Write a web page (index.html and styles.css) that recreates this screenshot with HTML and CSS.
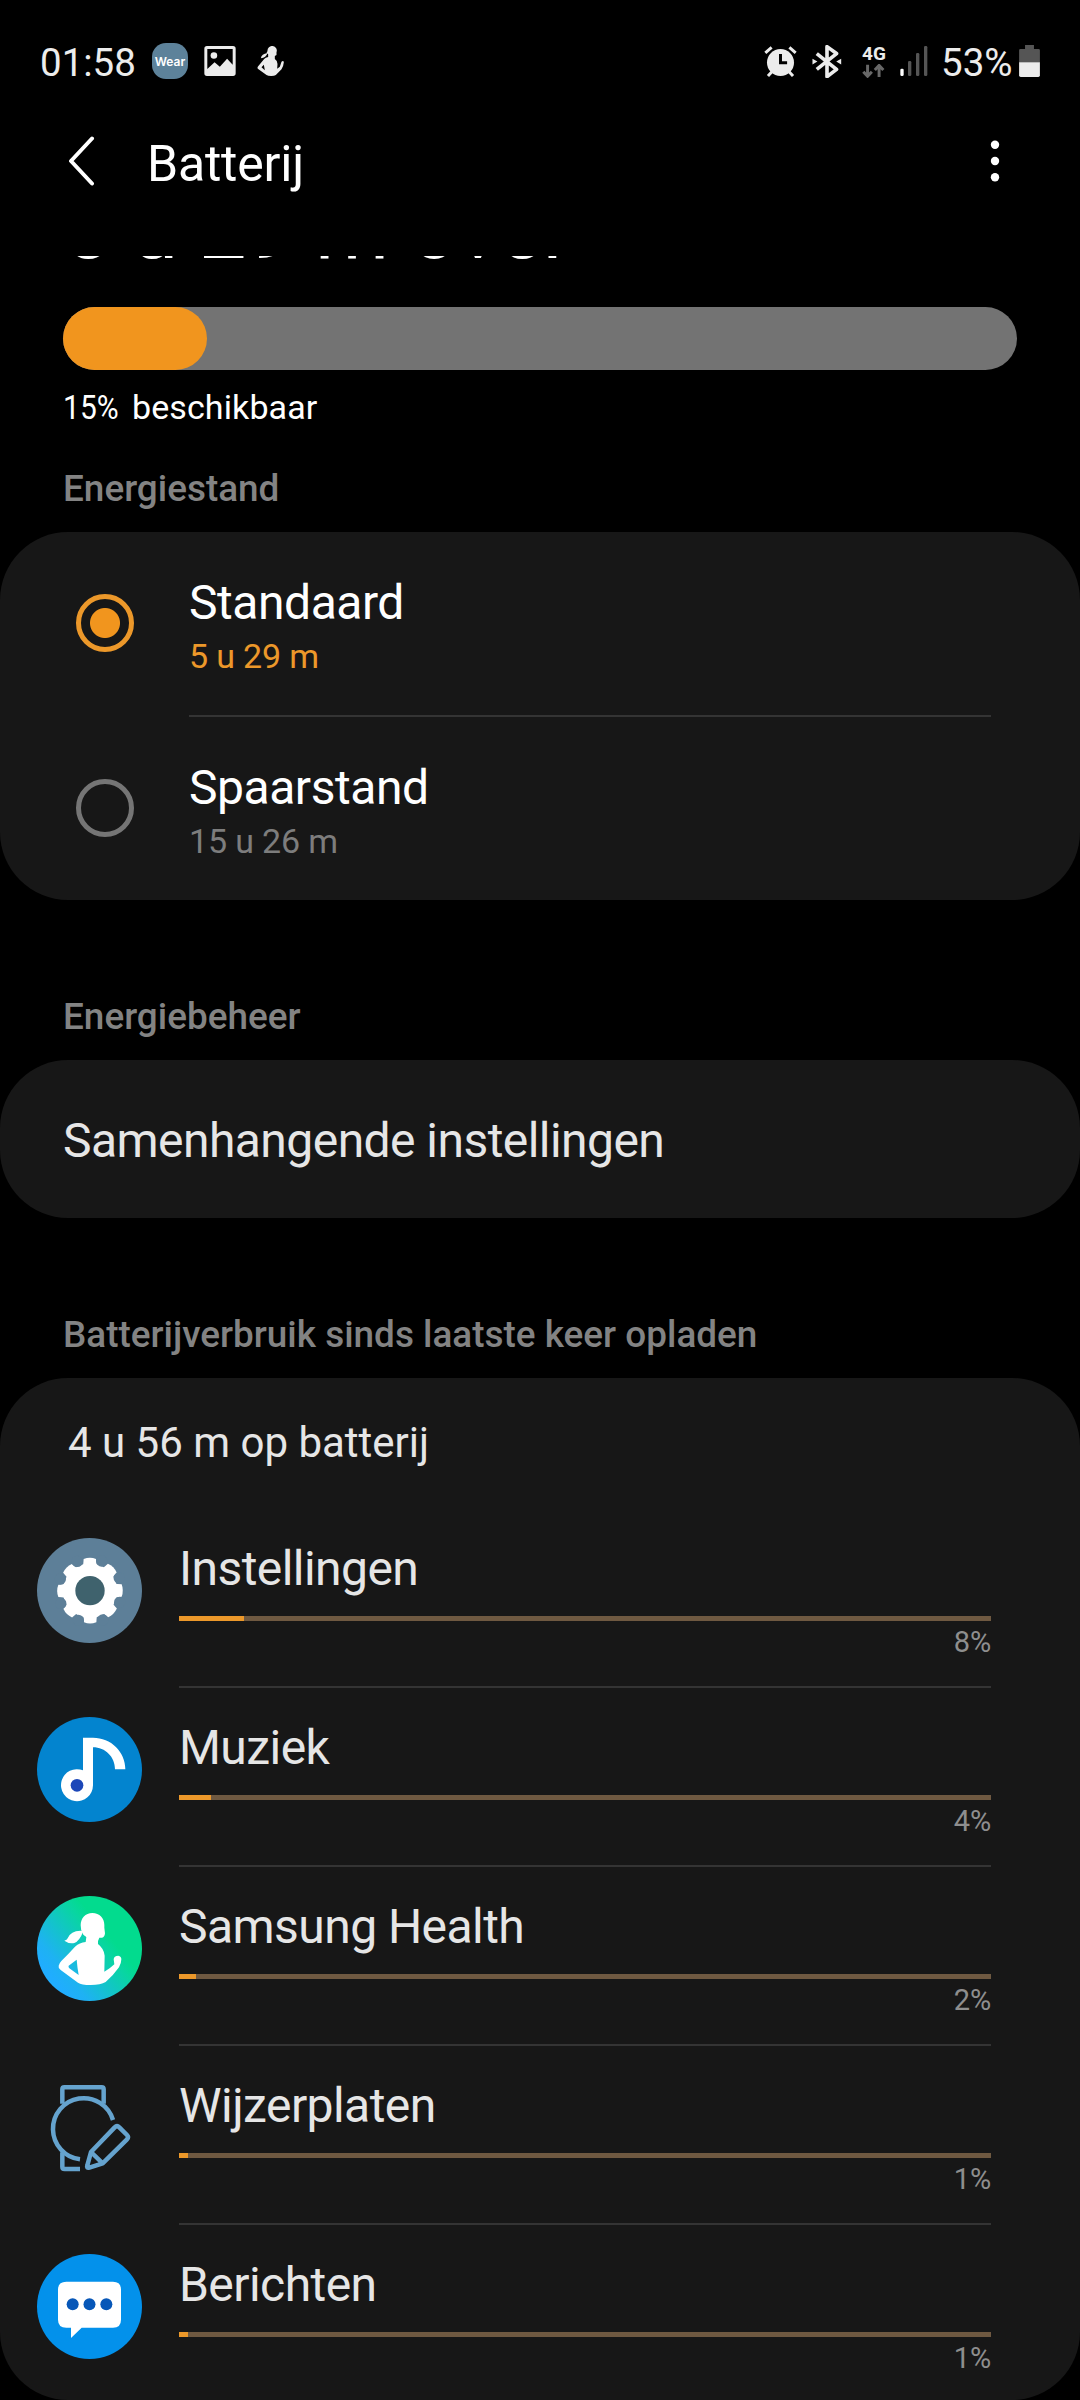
FILE: index.html
```html
<!DOCTYPE html>
<html lang="nl">
<head>
<meta charset="utf-8">
<title>Batterij</title>
<link rel="stylesheet" href="styles.css">
</head>
<body>
<div class="screen">
  <div class="status">
    <span class="status-text clock">01:58</span>
    <span class="wear">Wear</span>
    <svg class="ic-picture" viewBox="612 77 95 91" width="32" height="30"><path fill="#ececec" fill-rule="evenodd" d="M620 77h79q8 0 8 8v75q0 8-8 8h-79q-8 0-8-8V85q0-8 8-8zm1 9v61l22-21 16 14 22-24 17 18V86z"/><circle cx="641" cy="106" r="10" fill="#ececec"/></svg>
    <svg class="ic-health" viewBox="770 78 80 90" width="27" height="30"><g fill="#ececec"><path d="M801 93a14 14 0 1 1 27 4v8l-5 3v9q8 5 8 15l-1 14 8-6 5-15q4-3 6-1l1 3q-1 12-7 21l-17 17q-4 3-14 3-10 0-14-3l-25-18q-4-4 0-8l18-22q4-4 12-6v-8l-5-4zM790 134l-7 8 10 9z" fill-rule="evenodd"/><path d="M801 99q-4 14-20 16 2-13 20-16z"/></g></svg>
    <span class="spacer"></span>
    <svg class="ic-alarm" viewBox="71 74 98 94" width="33" height="31"><circle cx="120" cy="124" r="41" fill="#ececec"/><path d="M74 95l19-17M166 95l-19-17M94 152l-12 13M146 152l12 13" stroke="#ececec" stroke-width="9" fill="none"/><path d="M120 98v27h20" stroke="#000" stroke-width="9" fill="none"/></svg>
    <svg class="ic-bt" viewBox="215 71 90 100" width="30" height="33"><path d="M229 97l60 48-29 22V76l29 21-60 48" fill="none" stroke="#ececec" stroke-width="11" stroke-linejoin="round"/><path d="M216 113l15 8-15 9zM303 113l-15 8 15 9z" fill="#ececec"/></svg>
    <span class="net"><span class="net-label">4G</span>
      <svg viewBox="366 133 70 42" width="23" height="14"><path d="M383 135v35M370 156l13 14 13-14M418 172v-35M405 151l13-14 13 14" fill="none" stroke="#686868" stroke-width="9"/></svg></span>
    <svg class="ic-signal" viewBox="479 79 84 90" width="28" height="30"><g fill="#555"><rect x="503" y="124" width="10" height="45" rx="4"/><rect x="527" y="100" width="10" height="69" rx="4"/><rect x="551" y="79" width="10" height="90" rx="4"/></g><rect x="480" y="147" width="10" height="22" rx="4" fill="#fff"/></svg>
    <span class="status-text percent">53%</span>
    <svg class="ic-battery" viewBox="837 74 63 97" width="21" height="32"><path fill="#555" d="M855 74h27v12h14q4 0 4 4v37h-63V90q0-4 4-4h14z"/><path fill="#ececec" d="M837 126h63v40q0 5-5 5h-53q-5 0-5-5z"/></svg>
  </div>

  <header class="appbar">
    <svg class="back" viewBox="0 0 28 50" width="28" height="50"><path d="M24 2.500L3 25l21 22.500" fill="none" stroke="#fff" stroke-width="4" stroke-linecap="round" stroke-linejoin="round"/></svg>
    <h1 class="title">Batterij</h1>
    <svg class="more" viewBox="0 0 10 42" width="10" height="42"><g fill="#fff"><circle cx="5" cy="4.700" r="4.200"/><circle cx="5" cy="21" r="4.200"/><circle cx="5" cy="37.300" r="4.200"/></g></svg>
  </header>

  <main class="content">
    <div class="remaining">5 u 29 m over</div>
    <div class="level"><div class="level-fill"></div></div>
    <div class="available"><span class="narrow">15%</span><span>beschikbaar</span></div>

    <h2 class="label">Energiestand</h2>
    <section class="card modes">
      <div class="mode">
        <span class="radio on"></span>
        <div><div class="item-title">Standaard</div><div class="sub active">5 u 29 m</div></div>
      </div>
      <div class="mode-divider"></div>
      <div class="mode">
        <span class="radio"></span>
        <div><div class="item-title">Spaarstand</div><div class="sub">15 u 26 m</div></div>
      </div>
    </section>

    <h2 class="label spaced">Energiebeheer</h2>
    <section class="card related">Samenhangende instellingen</section>

    <h2 class="label spaced">Batterijverbruik sinds laatste keer opladen</h2>
    <section class="card usage">
      <div class="summary">4 u 56 m op batterij</div>

      <div class="app">
        <svg class="app-icon" viewBox="51 54 315 315"><circle cx="208.500" cy="211.500" r="157.500" fill="#5d7f98"/><g transform="translate(210 212)"><circle r="82" fill="#fff"/><g fill="#fff"><path id="tooth" d="M-21-70L-19-95Q0-102 18-95L21-70z"/><use href="#tooth" transform="rotate(45)"/><use href="#tooth" transform="rotate(90)"/><use href="#tooth" transform="rotate(135)"/><use href="#tooth" transform="rotate(180)"/><use href="#tooth" transform="rotate(225)"/><use href="#tooth" transform="rotate(270)"/><use href="#tooth" transform="rotate(315)"/></g><g fill="#5d7f98"><circle id="notch" cx="35" cy="-89" r="17"/><use href="#notch" transform="rotate(45)"/><use href="#notch" transform="rotate(90)"/><use href="#notch" transform="rotate(135)"/><use href="#notch" transform="rotate(180)"/><use href="#notch" transform="rotate(225)"/><use href="#notch" transform="rotate(270)"/><use href="#notch" transform="rotate(315)"/></g><circle r="44" fill="#3f626d"/></g></svg>
        <div class="app-body"><div class="app-name">Instellingen</div><div class="bar"><div class="bar-fill" style="width:8%"></div></div><div class="pct">8%</div></div>
      </div>

      <div class="app">
        <svg class="app-icon" viewBox="51 590 315 315"><circle cx="208.500" cy="747.500" r="157.500" fill="#0384cf"/><path fill="#fff" d="M189 652h30c54 0 97 42 97 95h-31c0-37-29-66-66-66v114a48 48 0 1 1-30-45z"/><circle cx="171" cy="795" r="19" fill="#1c47b8"/></svg>
        <div class="app-body"><div class="app-name">Muziek</div><div class="bar"><div class="bar-fill" style="width:4%"></div></div><div class="pct">4%</div></div>
      </div>

      <div class="app">
        <svg class="app-icon" viewBox="51 77 315 315"><defs><linearGradient id="health" x1=".2" y1=".85" x2=".72" y2=".42"><stop offset="0" stop-color="#20adff"/><stop offset=".2" stop-color="#1eb2f2"/><stop offset=".85" stop-color="#08d6a0"/><stop offset="1" stop-color="#02db8e"/></linearGradient></defs><circle cx="208.500" cy="234.500" r="157.500" fill="url(#health)"/><path fill="#fff" fill-rule="evenodd" d="M217 128c22 0 36 15 36 36v8l2 17q-1 12-9 13h-8q-5 8-4 19 18 14 20 35l-1 48q17-9 30-22l-2-15q1-11 14-11 9 2 9 11 0 12-7 24-15 22-40 44-15 9-45 9-28 0-38-7l-52-38q-8-6-6-13 1-6 8-14 24-24 41-43 14-12 32-14l2-15-9-7q-9-14-8-28c0-21 14-37 35-37zM170 268l-24 18q-2 4 2 8l28 20q-4-22-6-46z"/><path fill="#fff" d="M190 182q-36-4-47 22-2 5-10 7 16 11 30 7 16-6 27-36z"/></svg>
        <div class="app-body"><div class="app-name">Samsung Health</div><div class="bar"><div class="bar-fill" style="width:2.100%"></div></div><div class="pct">2%</div></div>
      </div>

      <div class="app">
        <svg class="app-icon" viewBox="51 614 315 315"><g fill="none" stroke="#65a3ce" stroke-width="13.500"><path d="M279 749a92 92 0 1 0-99 118"/><path d="M127 700v-43q0-6 6-6h112q6 0 6 6v43"/><path d="M127 846v43q0 7 7 7h46"/><path stroke-linejoin="round" d="M213 845l71-74q7-7 14 0l23 23q6 6 0 13l-73 72-40 13q-9 2-6-7zM213 845l35 34"/></g></svg>
        <div class="app-body"><div class="app-name">Wijzerplaten</div><div class="bar"><div class="bar-fill" style="width:1.1%"></div></div><div class="pct">1%</div></div>
      </div>

      <div class="app">
        <svg class="app-icon" viewBox="51 101 315 315"><circle cx="208.500" cy="258.500" r="157.500" fill="#0391eb"/><path fill="#fff" d="M139 184h140q24 0 24 24v90q0 24-24 24h-94l-32 31v-31h-14q-25 0-25-24v-90q0-24 25-24z"/><g fill="#0757b8"><circle cx="158" cy="252" r="18"/><circle cx="208.500" cy="252" r="18"/><circle cx="259" cy="252" r="18"/></g></svg>
        <div class="app-body"><div class="app-name">Berichten</div><div class="bar"><div class="bar-fill" style="width:1.1%"></div></div><div class="pct">1%</div></div>
      </div>
    </section>
  </main>
</div>
</body>
</html>
```
FILE: styles.css
```css
* { box-sizing: border-box; }

body {
  margin: 0;
  background: #000;
  color: #fff;
  font-family: Roboto, "Liberation Sans", sans-serif;
}

svg { display: block; flex: none; }

.screen {
  width: 1080px;
  height: 2400px;
  overflow: hidden;
  display: flex;
  flex-direction: column;
}

.status {
  height: 122px;
  flex: none;
  display: flex;
  align-items: center;
  padding: 0 40px 0 40px;
}

.status-text {
  color: #ececec;
  font-size: 38.500px;
  line-height: 46px;
  padding-top: 3px;
  white-space: nowrap;
}

.clock { width: 112px; }

.wear {
  width: 36px;
  height: 36px;
  border-radius: 14px;
  background: #5d829a;
  color: #fff;
  font: 600 12px/37px Inter, sans-serif;
  text-align: center;
}

.ic-picture { margin-left: 16px; }
.ic-health { margin-left: 21px; }
.spacer { flex: 1; }
.ic-bt { margin-left: 15px; }

.net {
  width: 24px;
  height: 33px;
  margin-left: 20px;
  display: flex;
  flex-direction: column;
  justify-content: space-between;
}

.net-label {
  color: #ececec;
  font-size: 19px;
  font-weight: 700;
  line-height: 17px;
}

.ic-signal { margin-left: 14px; }
.percent { margin-left: 13px; width: 78px; }

.appbar {
  height: 134px;
  flex: none;
  display: flex;
  align-items: center;
  padding: 0 80px 56px 68px;
}

.title {
  flex: 1;
  margin: 0 0 0 51px;
  padding-top: 5px;
  font-size: 50px;
  font-weight: 400;
  line-height: 60px;
  letter-spacing: -.2px;
}

.content {
  flex: 1;
  overflow: hidden;
}

.remaining {
  margin: -76px 0 0 63px;
  font-size: 84.500px;
  line-height: 100px;
}

.level {
  height: 63px;
  margin: 27px 63px 0;
  border-radius: 32px;
  background: #737373;
}

.level-fill {
  width: 144px;
  height: 63px;
  border-radius: 32px;
  background: #f1951e;
}

.available {
  display: flex;
  margin: 17px 0 0 63px;
  font-size: 34px;
  line-height: 40px;
  letter-spacing: .1px;
}

.narrow {
  width: 69px;
  transform: scaleX(.88);
  transform-origin: left;
}

.label {
  margin: 40px 0 21px 63px;
  color: #838383;
  font-size: 36.900px;
  font-weight: 500;
  line-height: 44px;
}

.label.spaced { margin-top: 95px; }

.card {
  background: #171717;
  border-radius: 68px;
}

.mode {
  height: 183px;
  display: flex;
  padding: 43px 0 0 76px;
}

.mode-divider {
  height: 2px;
  margin: 0 89px 0 189px;
  background: #343434;
}

.radio {
  width: 58px;
  height: 58px;
  margin: 19px 55px 0 0;
  border: 4.500px solid #757575;
  border-width: 5px;
  border-radius: 50%;
}

.radio.on {
  border-color: #ec982a;
  background: radial-gradient(circle, #f1951e 14.500px, transparent 15.500px);
}

.item-title {
  font-size: 48px;
  line-height: 56px;
  letter-spacing: -.450px;
}

.sub {
  margin-top: 5px;
  color: #7d7d7d;
  font-size: 34px;
  line-height: 40px;
  letter-spacing: -.150px;
}

.sub.active { color: #ec982a; }

.related {
  height: 158px;
  padding: 5px 0 0 63px;
  color: #e6e6e6;
  font-size: 48px;
  line-height: 152px;
  letter-spacing: -.550px;
}

.usage {
  height: 1022px;
  padding-top: 40px;
  color: #e6e6e6;
}

.summary {
  margin: 0 0 41px 68px;
  font-size: 42px;
  line-height: 50px;
}

.app {
  height: 179px;
  display: flex;
  padding-left: 37px;
}

.app-icon {
  width: 105px;
  height: 105px;
  margin: 29px 37px 0 0;
}

.app-body {
  width: 812px;
  padding-top: 32px;
  border-bottom: 2px solid #343434;
}

.app:last-child { height: 175px; }
.app:last-child .app-body { border: 0; }

.app-name {
  font-size: 48px;
  line-height: 56px;
  letter-spacing: -.550px;
}

.bar {
  height: 5px;
  margin-top: 19px;
  background: #6f5941;
}

.bar-fill {
  height: 5px;
  background: #ec982a;
}

.pct {
  margin-top: 4px;
  color: #8e8e8e;
  font-size: 29px;
  line-height: 34px;
  letter-spacing: -.200px;
  text-align: right;
}
```
